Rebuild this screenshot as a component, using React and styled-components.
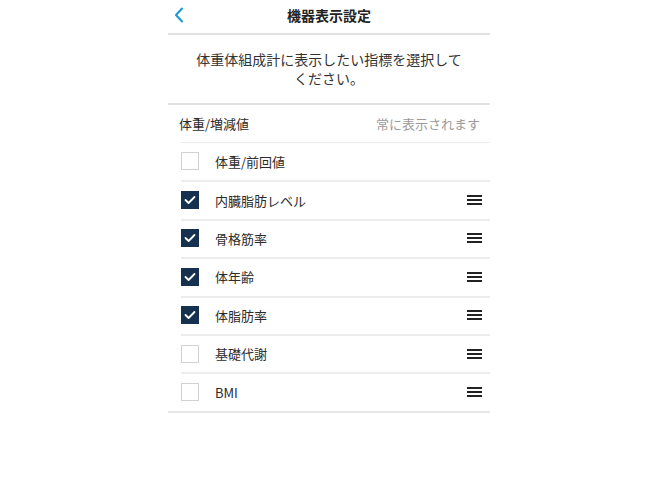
import styled, { createGlobalStyle } from "styled-components";

const GlobalStyle = createGlobalStyle`
  body {
    margin: 0;
    background: #fff;
    font-family: "Noto Sans CJK JP", "Noto Sans", sans-serif;
    color: #2b2b2b;
  }
`;

const Screen = styled.div`
  width: 322px;
  margin: 0 auto;
  transform: translateX(-1px);
`;

const Header = styled.div`
  height: 33px;
  display: flex;
  align-items: center;
  justify-content: center;
  position: relative;
  border-bottom: 2px solid #e0e0e0;
`;

const Back = styled.svg`
  position: absolute;
  left: 6px;
  top: 7px;
`;

const Title = styled.h1`
  margin: 0;
  font-size: 14px;
  font-weight: 700;
  color: #222;
  margin-top: -3px;
`;

const Intro = styled.p`
  margin: 0;
  padding: 15px 20px 15px;
  text-align: center;
  font-size: 14px;
  line-height: 19px;
  color: #333;
  border-bottom: 2px solid #e0e0e0;
`;

const FixedRow = styled.div`
  height: 37px;
  display: flex;
  align-items: center;
  justify-content: space-between;
  padding: 0 10px 0 11px;
  font-size: 13px;
  color: #2b2b2b;
`;

const Note = styled.span`
  color: #9a9a9a;
`;

const List = styled.div`
  padding-left: 13px;
  border-bottom: 2px solid #e6e6e6;
`;

const Row = styled.div`
  height: 38.4px;
  box-sizing: border-box;
  display: flex;
  align-items: center;
  border-top: 2px solid #ececec;
  padding-right: 8px;
  padding-bottom: 1px;
  &:first-child {
    border-top-width: 1.5px;
  }
`;

const Box = styled.div`
  width: 18px;
  height: 18px;
  box-sizing: border-box;
  border: ${p => (p.checked ? "none" : "1px solid #d2d2d2")};
  background: ${p => (p.checked ? "#16304f" : "#fff")};
  display: flex;
  align-items: center;
  justify-content: center;
  flex-shrink: 0;
`;

const Label = styled.span`
  flex: 1;
  margin-left: 16px;
  font-size: 13px;
  color: #2b2b2b;
`;

const Handle = styled.div`
  width: 15px;
  display: flex;
  flex-direction: column;
  gap: 2px;
  span {
    display: block;
    height: 2px;
    background: #222;
  }
`;

const items = [
  { label: "体重/前回値", checked: false, handle: false },
  { label: "内臓脂肪レベル", checked: true, handle: true },
  { label: "骨格筋率", checked: true, handle: true },
  { label: "体年齢", checked: true, handle: true },
  { label: "体脂肪率", checked: true, handle: true },
  { label: "基礎代謝", checked: false, handle: true },
  { label: "BMI", checked: false, handle: true },
];

function Check() {
  return (
    <svg width="12" height="10" viewBox="0 0 12 10">
      <path d="M1.5 5 L4.6 8 L10.5 2" fill="none" stroke="#fff" strokeWidth="1.8" strokeLinecap="round" strokeLinejoin="round" />
    </svg>
  );
}

export default function App() {
  return (
    <Screen>
      <GlobalStyle />
      <Header>
        <Back width="10" height="16" viewBox="0 0 10 16">
          <path d="M8 1.5 L2 8 L8 14.5" fill="none" stroke="#1a9ad6" strokeWidth="2" strokeLinecap="round" strokeLinejoin="round" />
        </Back>
        <Title>機器表示設定</Title>
      </Header>
      <Intro>
        体重体組成計に表示したい指標を選択して
        <br />
        ください。
      </Intro>
      <FixedRow>
        <span>体重/増減値</span>
        <Note>常に表示されます</Note>
      </FixedRow>
      <List>
        {items.map(it => (
          <Row key={it.label}>
            <Box checked={it.checked}>{it.checked && <Check />}</Box>
            <Label>{it.label}</Label>
            {it.handle && (
              <Handle>
                <span />
                <span />
                <span />
              </Handle>
            )}
          </Row>
        ))}
      </List>
    </Screen>
  );
}
